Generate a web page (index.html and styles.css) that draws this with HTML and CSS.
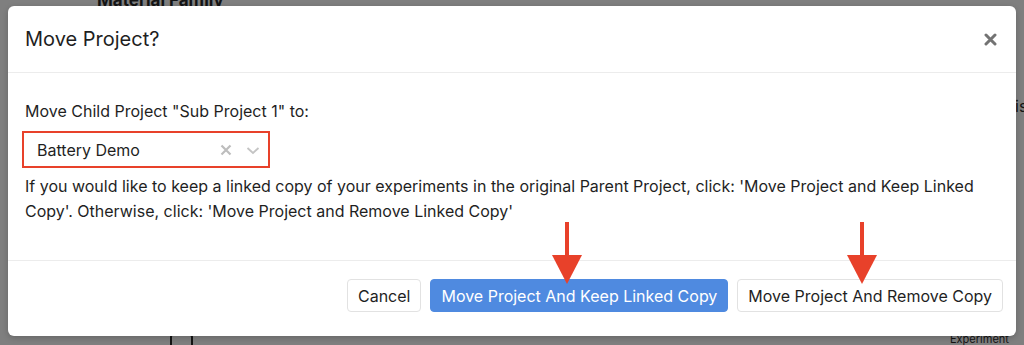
FILE: index.html
```html
<!DOCTYPE html>
<html lang="en">

<head>
    <meta charset="UTF-8">
    <meta name="viewport" content="width=device-width, initial-scale=1.0">
    <title>Move Project</title>
    <link rel="stylesheet" href="styles.css">
</head>

<body>
    <!-- Dimmed page underneath the dialog -->
    <div class="page-behind">
        <span class="behind-title">Material Family</span>
        <span class="behind-side">is</span>
        <span class="behind-icon"></span>
        <span class="behind-foot">Experiment 10?</span>
    </div>

    <div class="modal">
        <div class="modal-header">
            <h2>Move Project?</h2>
            <button class="close-btn" aria-label="Close">
                <svg width="13" height="13" viewBox="0 0 13 13">
                    <path d="M2 2 L11 11 M11 2 L2 11" stroke="#737373" stroke-width="3" stroke-linecap="round" />
                </svg>
            </button>
        </div>

        <div class="modal-body">
            <label class="field-label">Move Child Project "Sub Project 1" to:</label>
            <div class="select-box">
                <span class="select-value">Battery Demo</span>
                <span class="select-icons">
                    <svg width="12" height="12" viewBox="0 0 12 12">
                        <path d="M1.5 1.5 L10.5 10.5 M10.5 1.5 L1.5 10.5" stroke="#bdbdbd" stroke-width="2.2" />
                    </svg>
                    <span class="divider"></span>
                    <svg width="14" height="10" viewBox="0 0 14 10">
                        <path d="M1.5 3 L7 8 L12.5 3" stroke="#c4c4c4" stroke-width="1.8" fill="none" />
                    </svg>
                </span>
            </div>
            <p class="help-text">If you would like to keep a linked copy of your experiments in the original Parent Project, click: 'Move Project and Keep Linked Copy'. Otherwise, click: 'Move Project and Remove Linked Copy'</p>
        </div>

        <div class="modal-footer">
            <button class="btn">Cancel</button>
            <button class="btn btn-primary">Move Project And Keep Linked Copy</button>
            <button class="btn">Move Project And Remove Copy</button>
        </div>

        <!-- annotation arrows -->
        <svg class="arrow arrow-keep" width="32" height="62" viewBox="0 0 32 62">
            <rect x="14" y="0" width="4" height="34" fill="#e8412a" />
            <polygon points="1,33 31,33 16,62" fill="#e8412a" />
        </svg>
        <svg class="arrow arrow-remove" width="32" height="62" viewBox="0 0 32 62">
            <rect x="14" y="0" width="4" height="34" fill="#e8412a" />
            <polygon points="1,33 31,33 16,62" fill="#e8412a" />
        </svg>
    </div>
</body>

</html>
```

FILE: styles.css
```css
* {
    margin: 0;
    padding: 0;
    box-sizing: border-box;
}

body {
    font-family: 'Inter', 'Liberation Sans', sans-serif;
    background-color: #7f7f7f;
    color: #1f1f1f;
    width: 1024px;
    height: 345px;
    overflow: hidden;
    position: relative;
    padding: 6px 8px;
}

/* Page under the backdrop */
.page-behind {
    position: absolute;
    inset: 0;
    overflow: hidden;
    color: #141414;
}

.behind-title {
    position: absolute;
    left: 97px;
    top: -10px;
    font-size: 17px;
    font-weight: bold;
}

.behind-side {
    position: absolute;
    left: 1015px;
    top: 96px;
    font-size: 16px;
}

.behind-icon {
    position: absolute;
    left: 170px;
    top: 334px;
    width: 23px;
    height: 11px;
    border: 2px solid #141414;
    border-bottom: none;
    border-radius: 3px 3px 0 0;
}

.behind-foot {
    position: absolute;
    left: 950px;
    top: 334px;
    font-size: 11px;
    line-height: 11px;
}

/* Dialog */
.modal {
    position: relative;
    background-color: #fff;
    border-radius: 6px;
    height: 330px;
    box-shadow: 0 2px 6px rgba(0, 0, 0, 0.2);
    display: flex;
    flex-direction: column;
}

.modal-header {
    height: 67px;
    padding: 0 19px 0 17px;
    display: flex;
    align-items: center;
    justify-content: space-between;
    border-bottom: 1px solid #ececec;
}

.modal-header h2 {
    font-size: 20px;
    font-weight: 400;
    color: #1f1f1f;
}

.close-btn {
    background: none;
    border: none;
    display: flex;
    cursor: pointer;
}

.modal-body {
    padding: 28px 17px 0;
    height: 188px;
    border-bottom: 1px solid #ececec;
    font-size: 16px;
}

.field-label {
    display: block;
    line-height: 20px;
}

.select-box {
    width: 248px;
    height: 37px;
    margin: 10px 0 0 -3px;
    border: 2.5px solid #e8412a;
    display: flex;
    align-items: center;
    justify-content: space-between;
    padding: 0 8px 0 13px;
}

.select-icons {
    display: flex;
    align-items: center;
    gap: 7px;
}

.help-text {
    margin-top: 6px;
    line-height: 25px;
}

.modal-footer {
    flex: 1;
    display: flex;
    justify-content: flex-end;
    align-items: flex-start;
    gap: 9px;
    padding: 18px 13px 0;
}

.btn {
    font-family: inherit;
    font-size: 16px;
    height: 33px;
    padding: 0 10px;
    background-color: #fff;
    color: #1f1f1f;
    border: 1px solid #e2e2e2;
    border-radius: 4px;
    cursor: pointer;
}

.btn-primary {
    background-color: #4f8ae0;
    border-color: #4f8ae0;
    color: #fff;
}

/* Annotation arrows */
.arrow {
    position: absolute;
    top: 216px;
}

.arrow-keep {
    left: 543px;
}

.arrow-remove {
    left: 838px;
}
```
